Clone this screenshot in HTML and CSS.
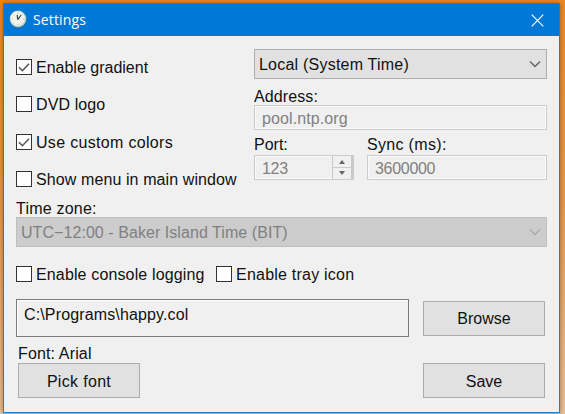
FILE: index.html
```html
<!DOCTYPE html>
<html lang="en">
<head>
<meta charset="utf-8">
<title>Settings</title>
<link rel="stylesheet" href="styles.css">
</head>
<body>
<main class="window">
  <header class="titlebar">
    <svg class="clock" viewBox="0 0 18 18">
      <circle cx="9" cy="9.2" r="8.8" fill="#245e7c"/>
      <circle cx="9" cy="9" r="8.4" fill="#a9cfd0"/>
      <circle cx="8.7" cy="8.6" r="7.3" fill="#f3f4ec"/>
      <path d="M9 2.5v1M9 14v1M2.6 9h1M14.2 9h1M4.5 4.5l.6.6M13.3 4.5l-.6.6M4.5 13.3l.6-.6M13.3 13.3l-.6-.6" stroke="#8faaa9" stroke-width=".8"/>
      <path d="M8.8 9.6 8.1 4.8M8.8 9.6l3.3-4.6" stroke="#263b42" stroke-width="1.1" fill="none"/>
    </svg>
    <h1 class="title">Settings</h1>
    <svg class="close" viewBox="0 0 13 13"><path d="M.7.7l11.6 11.6M12.3.7.7 12.3" stroke="#fff" stroke-width="1.2"/></svg>
  </header>
  <div class="content">
    <div class="top">
      <div class="options">
        <label class="check"><span class="box"><svg viewBox="0 0 14 14"><path d="M2 7.2l3.4 3.5L12 3.7"/></svg></span><span class="text">Enable gradient</span></label>
        <label class="check"><span class="box"></span><span class="text s1">DVD logo</span></label>
        <label class="check"><span class="box"><svg viewBox="0 0 14 14"><path d="M2 7.2l3.4 3.5L12 3.7"/></svg></span><span class="text s3">Use custom colors</span></label>
        <label class="check"><span class="box"></span><span class="text s1">Show menu in main window</span></label>
      </div>
      <div class="source">
        <div class="select"><span class="text s2">Local (System Time)</span><svg class="chevron" viewBox="0 0 12 8"><path d="M1 1.5l5 5 5-5"/></svg></div>
        <div class="caption address"><span class="s1">Address:</span></div>
        <div class="field"><span class="s1">pool.ntp.org</span></div>
        <div class="pair">
          <div>
            <div class="caption">Port:</div>
            <div class="field"><span class="tight">123</span>
              <div class="spin"><i class="up"></i><i class="down"></i></div>
            </div>
          </div>
          <div>
            <div class="caption"><span class="s3">Sync (ms):</span></div>
            <div class="field"><span class="tight">3600000</span></div>
          </div>
        </div>
      </div>
    </div>
    <div class="zone-label"><span class="s2">Time zone:</span></div>
    <div class="select disabled"><span class="text s05">UTC−12:00 - Baker Island Time (BIT)</span><svg class="chevron" viewBox="0 0 12 8"><path d="M1 1.5l5 5 5-5"/></svg></div>
    <div class="extras">
      <label class="check console"><span class="box"></span><span class="text s15">Enable console logging</span></label>
      <label class="check"><span class="box"></span><span class="text s2">Enable tray icon</span></label>
    </div>
    <div class="file">
      <div class="path"><span class="s15">C:\Programs\happy.col</span></div>
      <div class="button"><span class="text">Browse</span></div>
    </div>
    <div class="font-label"><span class="s15">Font: Arial</span></div>
    <div class="actions">
      <div class="button"><span class="text s3">Pick font</span></div>
      <div class="button"><span class="text">Save</span></div>
    </div>
  </div>
</main>
</body>
</html>
```

FILE: styles.css
```css
* { box-sizing: border-box; }
body {
  margin: 0;
  width: 565px;
  height: 414px;
  overflow: hidden;
  padding: 3px 5px 1px 3px;
  background: linear-gradient(#ec8a25, #e79a4e 50%, #e8c099);
  font: 16px/18px "Liberation Sans", Arial, sans-serif;
  color: #111;
  white-space: nowrap;
}
.window {
  height: 410px;
  border: 1px solid #1a7fd0;
  background: #f0f0f0;
  box-shadow: 0 0 5px rgba(70, 45, 20, .5);
}
.titlebar {
  height: 32px;
  display: flex;
  align-items: center;
  padding: 0 15px 0 5px;
  background: #0078d7;
}
.clock { width: 18px; height: 18px; margin-top: -2px; }
.title {
  flex: 1;
  margin: 0 0 0 6px;
  font: 14px/20px "Open Sans", "Noto Sans", sans-serif;
  letter-spacing: .15px;
  color: #fff;
}
.close { width: 13px; height: 13px; }
.content { padding: 13px 12px 0; }

.text { padding-top: 2px; }
.s05 { letter-spacing: .06px; }
.s1 { letter-spacing: .1px; }
.s15 { letter-spacing: .14px; }
.s2 { letter-spacing: .22px; }
.s3 { letter-spacing: .32px; }
.tight { letter-spacing: -.3px; }

.top { display: flex; height: 151px; }
.options { width: 238px; padding-top: 9px; }
.check { display: flex; align-items: center; gap: 4px; height: 18px; }
.options .check { margin-bottom: 19.4px; }
.box { width: 16px; height: 16px; border: 1px solid #333; background: #fff; flex: none; }
.box svg { display: block; width: 14px; height: 14px; }
.box path { fill: none; stroke: #555; stroke-width: 1.5; }
.source { width: 293px; }
.select {
  display: flex;
  align-items: center;
  justify-content: space-between;
  height: 30px;
  padding: 0 5px 0 4px;
  border: 1px solid #adadad;
  background: #e1e1e1;
}
.chevron { width: 12px; height: 8px; }
.chevron path { fill: none; stroke: #666; stroke-width: 1.5; }
.caption { height: 25px; padding-top: 6px; }
.caption.address { height: 26px; padding-top: 9px; }
.field {
  display: flex;
  justify-content: space-between;
  height: 25px;
  padding: 4px 0 0 7px;
  border: 1px solid #ccc;
  box-shadow: inset 0 0 0 1px #fafafa;
  color: #808080;
}
.pair { display: grid; grid-template-columns: 100px 180px; column-gap: 13px; }
.spin {
  width: 21px;
  height: 23px;
  margin-top: -4px;
  border: solid #c9c9c9;
  border-width: 0 2px 0 1px;
  display: grid;
  grid-template-rows: 11px 12px;
  justify-items: center;
  align-items: center;
  background: linear-gradient(#ccc, #ccc) 0 11px / 100% 1px no-repeat #f0f0f0;
}
.up, .down { width: 0; height: 0; border: 3px solid transparent; }
.up { border-top: 0; border-bottom: 4px solid #666; }
.down { border-bottom: 0; border-top: 4px solid #666; }
.zone-label { height: 17px; }
.disabled { background: #ccc; border-color: #bfbfbf; color: #808080; }
.disabled .chevron path { stroke: #aaa; }
.extras { display: flex; height: 52px; padding-top: 18px; }
.console { width: 200px; }
.file { display: flex; align-items: center; gap: 14px; height: 38px; }
.path {
  width: 393px;
  height: 38px;
  padding: 6px 7px;
  border: 1px solid #7a7a7a;
  box-shadow: inset 1px 1px #fff;
}
.button {
  display: flex;
  align-items: center;
  justify-content: center;
  width: 122px;
  height: 35px;
  border: 1px solid #adadad;
  background: #e1e1e1;
}
.font-label { height: 26px; padding: 8px 0 0 2px; }
.actions { display: flex; justify-content: space-between; padding: 0 2px; }
```
